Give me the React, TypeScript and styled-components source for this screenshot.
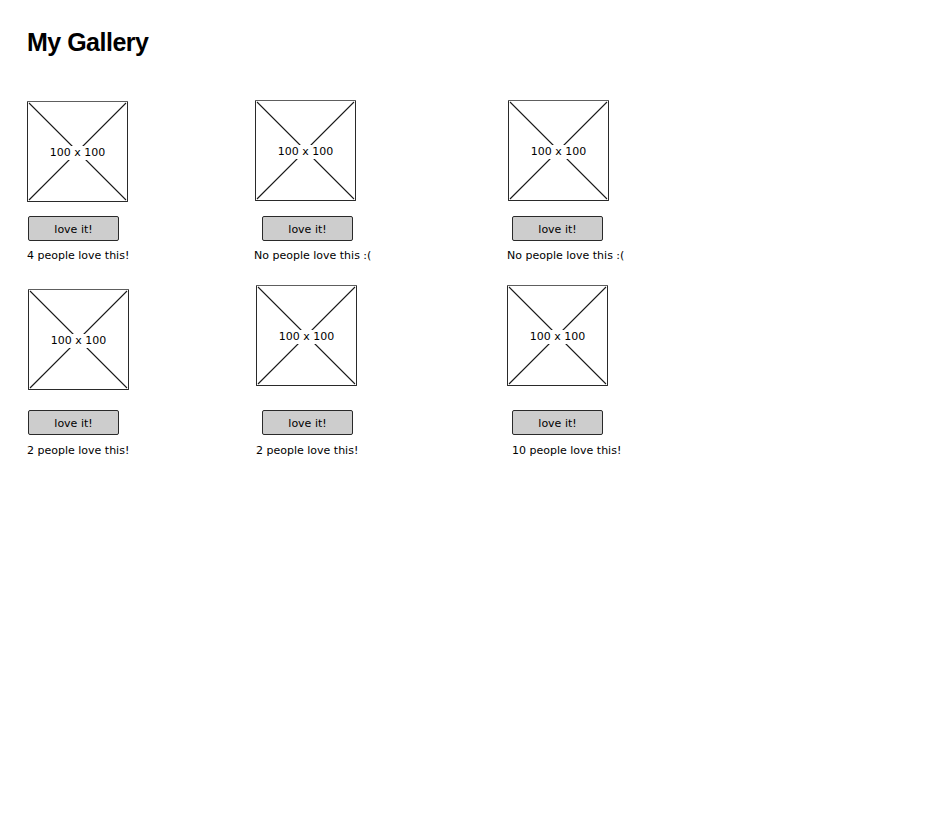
import React from "react";
import styled, { createGlobalStyle } from "styled-components";

const Global = createGlobalStyle`
  html, body { margin: 0; padding: 0; background: #ffffff; }
  body { font-family: "Comic Sans MS", "DejaVu Sans", sans-serif; color: #000; }
`;

const Page = styled.div`
  padding: 28px 0 0 27px;
`;

const Title = styled.h1`
  margin: 0;
  font-family: "Liberation Sans", Arial, sans-serif;
  font-weight: bold;
  font-size: 25px;
  letter-spacing: -0.5px;
  line-height: 29px;
`;

const Grid = styled.div`
  margin-top: 43px;
  display: grid;
  grid-template-columns: 228px 252px 200px;
  row-gap: 22px;
`;

const Cell = styled.div`
  display: flex;
  flex-direction: column;
  align-items: flex-start;
`;

const ImageArea = styled.div<{ $h: number }>`
  height: ${(p) => p.$h}px;
`;

const Frame = styled.div<{ $dx: number; $dy: number }>`
  position: relative;
  box-sizing: border-box;
  width: 101px;
  height: 101px;
  margin-left: ${(p) => p.$dx}px;
  margin-top: ${(p) => p.$dy}px;
  border: 1px solid #2a2a2a;
  border-top-color: #5e5e5e;
  border-radius: 1px;
  display: flex;
  align-items: center;
  justify-content: center;
`;

const Cross = styled.svg`
  position: absolute;
  inset: 0;
  width: 100%;
  height: 100%;
`;

const FrameLabel = styled.span`
  position: relative;
  background: #ffffff;
  padding: 0 2px;
  margin-top: 3px;
  font-size: 11px;
  line-height: 14px;
`;

const LoveButton = styled.button<{ $dx: number }>`
  box-sizing: border-box;
  width: 91px;
  height: 25px;
  margin: 0 0 0 ${(p) => p.$dx}px;
  padding: 2px 0 0;
  background: #cdcdcd;
  border: 1px solid #2a2a2a;
  border-radius: 2px;
  font-family: inherit;
  font-size: 11px;
  color: #000;
  cursor: pointer;
`;

const Caption = styled.div<{ $dx: number; $dy: number }>`
  margin: ${(p) => p.$dy}px 0 0 ${(p) => p.$dx}px;
  font-size: 11px;
  line-height: 14px;
  white-space: nowrap;
`;

type Item = {
  likes: number;
  area: number;
  fx: number;
  fy: number;
  bx: number;
  cx: number;
  cy: number;
};

const items: Item[] = [
  { likes: 4, area: 116, fx: 0, fy: 1, bx: 1, cx: 0, cy: 8 },
  { likes: 0, area: 116, fx: 0, fy: 0, bx: 7, cx: -1, cy: 8 },
  { likes: 0, area: 116, fx: 1, fy: 0, bx: 5, cx: 0, cy: 8 },
  { likes: 2, area: 125, fx: 1, fy: 4, bx: 1, cx: 0, cy: 9 },
  { likes: 2, area: 125, fx: 1, fy: 0, bx: 7, cx: 1, cy: 9 },
  { likes: 10, area: 125, fx: 0, fy: 0, bx: 5, cx: 5, cy: 9 },
];

const Placeholder = ({ dx, dy }: { dx: number; dy: number }) => (
  <Frame $dx={dx} $dy={dy}>
    <Cross viewBox="0 0 100 100" preserveAspectRatio="none">
      <line x1="1" y1="1" x2="99" y2="99" stroke="#1a1a1a" strokeWidth="1.1" />
      <line x1="99" y1="1" x2="1" y2="99" stroke="#1a1a1a" strokeWidth="1.1" />
    </Cross>
    <FrameLabel>100 x 100</FrameLabel>
  </Frame>
);

export default function App() {
  return (
    <Page>
      <Global />
      <Title>My Gallery</Title>
      <Grid>
        {items.map((it, i) => (
          <Cell key={i}>
            <ImageArea $h={it.area}>
              <Placeholder dx={it.fx} dy={it.fy} />
            </ImageArea>
            <LoveButton $dx={it.bx}>love it!</LoveButton>
            <Caption $dx={it.cx} $dy={it.cy}>
              {it.likes > 0 ? `${it.likes} people love this!` : "No people love this :("}
            </Caption>
          </Cell>
        ))}
      </Grid>
    </Page>
  );
}
